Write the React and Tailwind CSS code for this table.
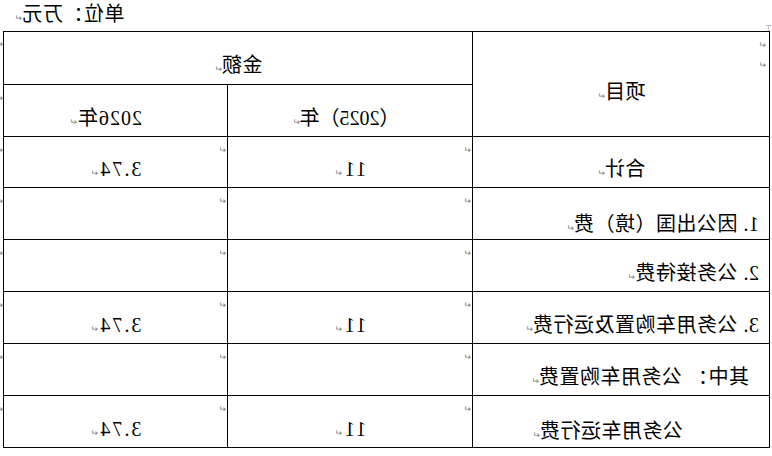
import React from 'react';

const rows = [
  { label: '合计', a: '11', b: '3.74', align: 'center' },
  { label: '1. 因公出国（境）费', a: '', b: '', pl: 'pl-[10px]', pt: 'pt-[20px]' },
  { label: '2. 公务接待费', a: '', b: '', pl: 'pl-[10px]' },
  { label: '3. 公务用车购置及运行费', a: '11', b: '3.74', pl: 'pl-[10px]' },
  { label: '其中： 公务用车购置费', a: '', b: '', pl: 'pl-[20px]' },
  { label: '公务用车运行费', a: '11', b: '3.74', pl: 'pl-[86px]', pt: 'pt-[18px]' },
];

function Mark({ className = '' }) {
  return <span className={`text-[9px] leading-none tracking-normal text-[#808080] ${className}`}>↵</span>;
}

function ValueCell({ value }) {
  return (
    <div className="relative flex items-center justify-center border-r border-b border-black pt-[14px]">
      <Mark className="absolute left-[1px] top-[9px]" />
      {value && (
        <span className="tracking-[2px]">
          {value}
          <Mark className="ml-[1px]" />
        </span>
      )}
    </div>
  );
}

export default function App() {
  return (
    <div className='relative w-[772px] h-[456px] overflow-hidden bg-white text-black text-[20px] leading-[24px] font-["Liberation_Serif","Noto_Sans_CJK_SC",serif] -scale-x-100'>
      {/* unit caption */}
      <div className="flex h-[31px] items-center justify-end pr-[14px] pb-[4px]">
        <span className="tracking-[0.5px]">
          单位：万元
          <Mark />
        </span>
      </div>
      <span className="absolute left-0 top-[25px] text-[8px] leading-none text-[#808080]">⊤</span>

      <div className="flex pl-[2px]">
        <div className="grid w-[767px] grid-cols-[297px_245px_224px] grid-rows-[53px_52px_51px_52px_52px_52px_52px_52px] border-l border-t border-black">
          <div className="relative row-span-2 flex items-center justify-center border-r border-b border-black pt-[15px]">
            <Mark className="absolute left-[3px] top-[9px]" />
            <Mark className="absolute left-[3px] top-[29px]" />
            <span className="tracking-[0.5px]">
              项目
              <Mark />
            </span>
          </div>
          <div className="col-span-2 flex items-center justify-center border-r border-b border-black pt-[14px]">
            <span className="tracking-[0.5px]">
              金额
              <Mark />
            </span>
          </div>
          <div className="flex items-center justify-center border-r border-b border-black pt-[14px] pl-[9px]">
            <span>
              （2025）年
              <Mark />
            </span>
          </div>
          <div className="flex items-center justify-center border-r border-b border-black pt-[14px] pl-[20px]">
            <span className="tracking-[1px]">
              2026年
              <Mark />
            </span>
          </div>

          {rows.map((r, i) => (
            <React.Fragment key={i}>
              <div
                className={`flex items-center border-r border-b border-black ${r.pt || 'pt-[14px]'} ${
                  r.align === 'center' ? 'justify-center' : r.pl
                }`}
              >
                <span className="tracking-[0.5px]">
                  {r.label}
                  <Mark />
                </span>
              </div>
              <ValueCell value={r.a} />
              <ValueCell value={r.b} />
            </React.Fragment>
          ))}
        </div>

        {/* end-of-row marks */}
        <div className="grid w-[4px] grid-rows-[54px_52px_51px_52px_52px_52px_52px_52px]">
          {Array.from({ length: 8 }).map((_, i) => (
            <div key={i} className="relative">
              <Mark className="absolute left-0 top-[9px]" />
            </div>
          ))}
        </div>
      </div>
    </div>
  );
}
